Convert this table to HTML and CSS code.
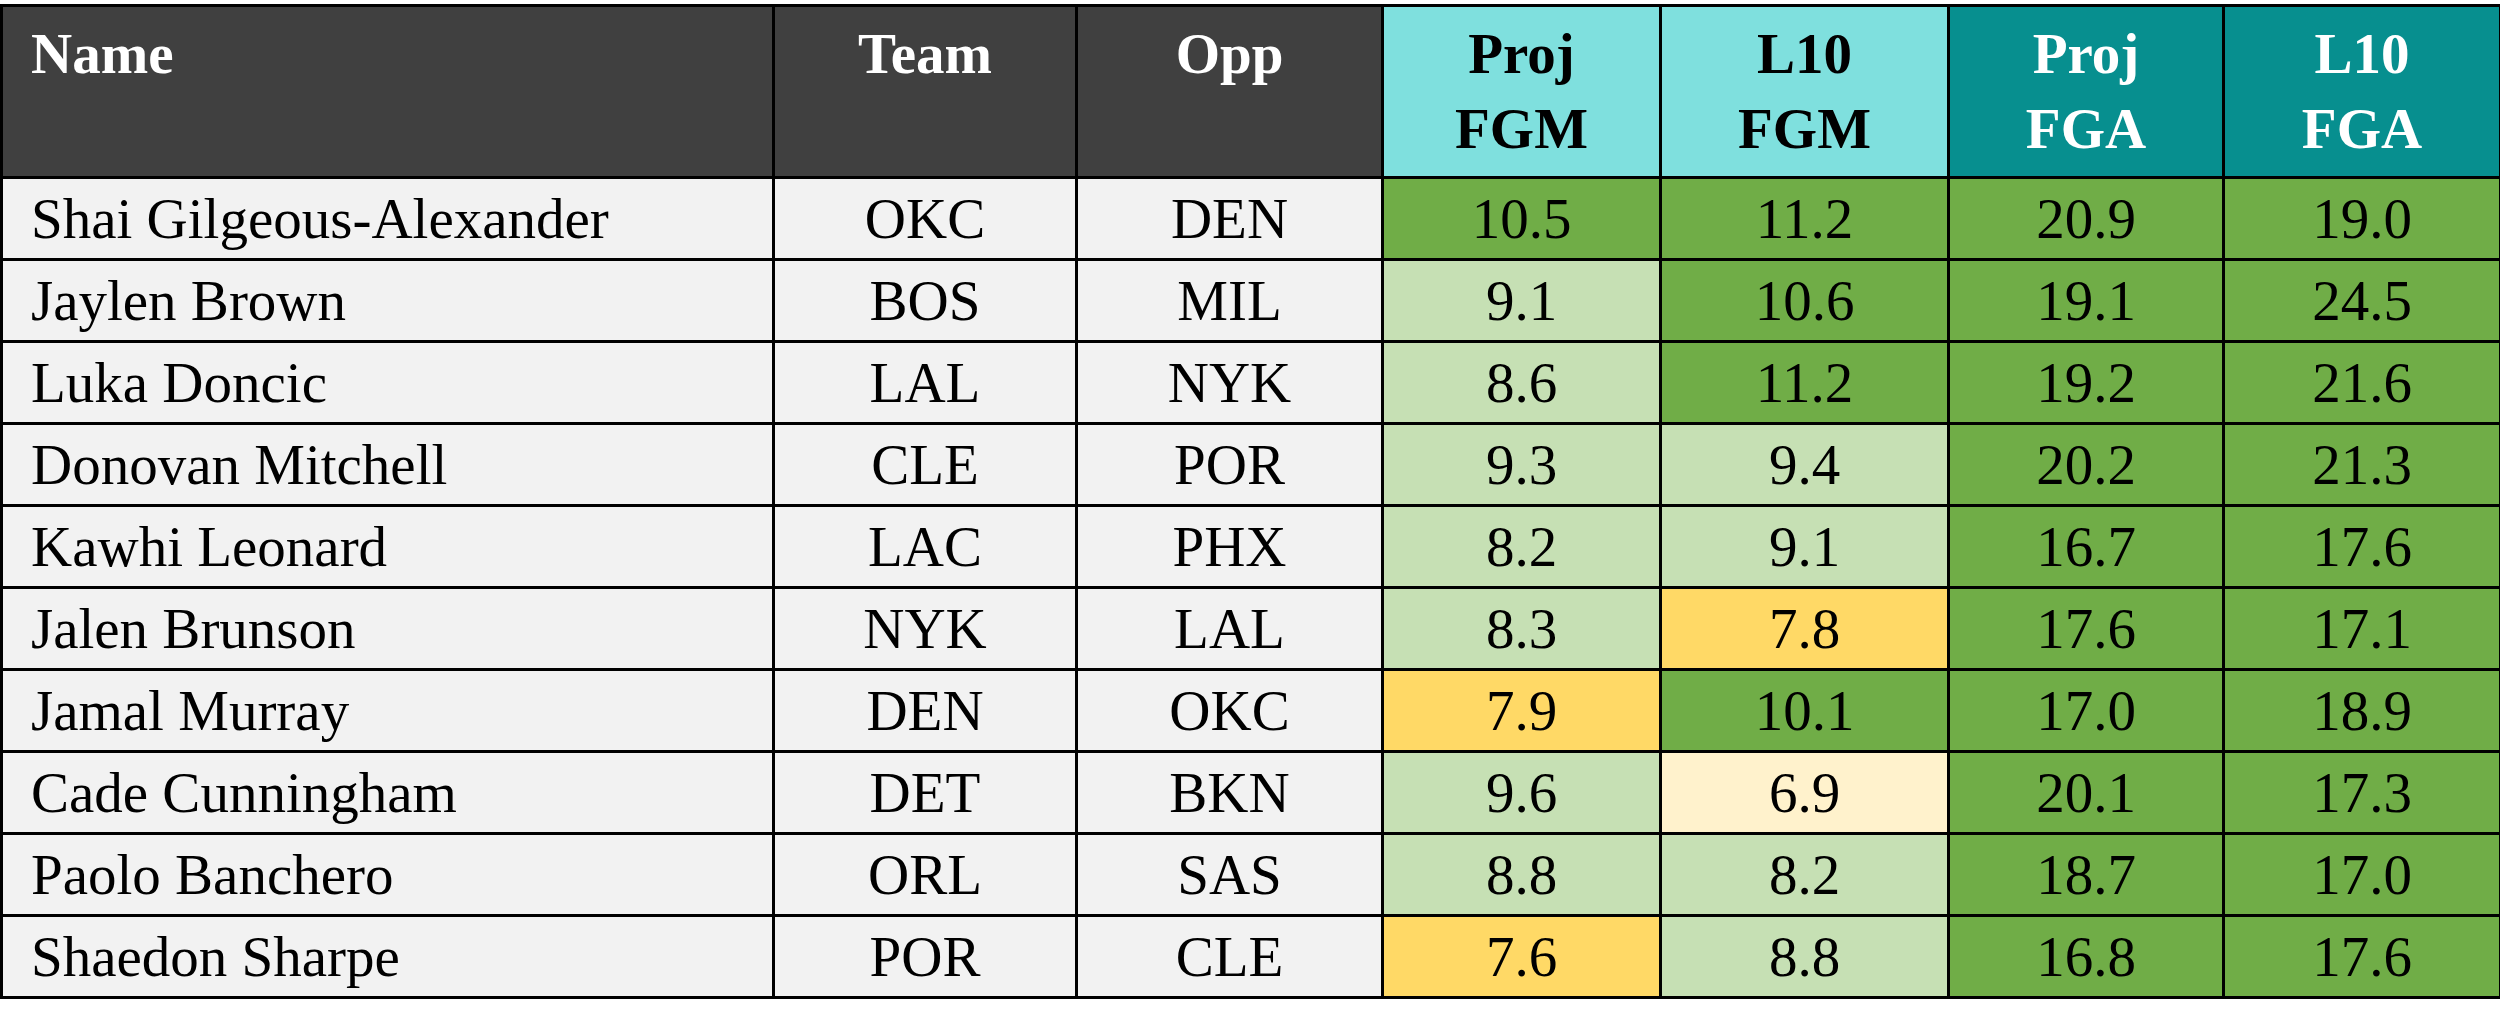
FILE: index.html
```html
<!DOCTYPE html>
<html>
<head>
<meta charset="utf-8">
<link rel="stylesheet" href="styles.css">
</head>
<body>
<table class="stats">
  <colgroup>
    <col class="c-name"><col class="c-team"><col class="c-opp"><col class="c-pfgm"><col class="c-lfgm"><col class="c-pfga"><col class="c-lfga">
  </colgroup>
  <thead>
    <tr>
      <th class="h-dark left">Name</th>
      <th class="h-dark">Team</th>
      <th class="h-dark">Opp</th>
      <th class="h-cyan">Proj<br>FGM</th>
      <th class="h-cyan">L10<br>FGM</th>
      <th class="h-teal">Proj<br>FGA</th>
      <th class="h-teal">L10<br>FGA</th>
    </tr>
  </thead>
  <tbody>
    <tr><td class="name">Shai Gilgeous-Alexander</td><td>OKC</td><td>DEN</td><td class="g">10.5</td><td class="g">11.2</td><td class="g">20.9</td><td class="g">19.0</td></tr>
    <tr><td class="name">Jaylen Brown</td><td>BOS</td><td>MIL</td><td class="lg">9.1</td><td class="g">10.6</td><td class="g">19.1</td><td class="g">24.5</td></tr>
    <tr><td class="name">Luka Doncic</td><td>LAL</td><td>NYK</td><td class="lg">8.6</td><td class="g">11.2</td><td class="g">19.2</td><td class="g">21.6</td></tr>
    <tr><td class="name">Donovan Mitchell</td><td>CLE</td><td>POR</td><td class="lg">9.3</td><td class="lg">9.4</td><td class="g">20.2</td><td class="g">21.3</td></tr>
    <tr><td class="name">Kawhi Leonard</td><td>LAC</td><td>PHX</td><td class="lg">8.2</td><td class="lg">9.1</td><td class="g">16.7</td><td class="g">17.6</td></tr>
    <tr><td class="name">Jalen Brunson</td><td>NYK</td><td>LAL</td><td class="lg">8.3</td><td class="y">7.8</td><td class="g">17.6</td><td class="g">17.1</td></tr>
    <tr><td class="name">Jamal Murray</td><td>DEN</td><td>OKC</td><td class="y">7.9</td><td class="g">10.1</td><td class="g">17.0</td><td class="g">18.9</td></tr>
    <tr><td class="name">Cade Cunningham</td><td>DET</td><td>BKN</td><td class="lg">9.6</td><td class="py">6.9</td><td class="g">20.1</td><td class="g">17.3</td></tr>
    <tr><td class="name">Paolo Banchero</td><td>ORL</td><td>SAS</td><td class="lg">8.8</td><td class="lg">8.2</td><td class="g">18.7</td><td class="g">17.0</td></tr>
    <tr><td class="name">Shaedon Sharpe</td><td>POR</td><td>CLE</td><td class="y">7.6</td><td class="lg">8.8</td><td class="g">16.8</td><td class="g">17.6</td></tr>
  </tbody>
</table>
</body>
</html>
```
FILE: styles.css
```css
html, body {
  margin: 0;
  padding: 0;
  background: #ffffff;
}

.stats {
  margin-top: 4px;
  border-collapse: collapse;
  table-layout: fixed;
  width: 2499px;
  font-family: "Liberation Serif", "Times New Roman", serif;
  font-size: 57px;
  color: #000000;
}

.c-name { width: 772px; }
.c-team { width: 303px; }
.c-opp  { width: 306px; }
.c-pfgm { width: 278px; }
.c-lfgm { width: 288px; }
.c-pfga { width: 275px; }
.c-lfga { width: 277px; }

.stats th,
.stats td {
  border: 3px solid #000000;
  text-align: center;
  padding: 0;
  white-space: nowrap;
}

.stats thead tr {
  height: 172px;
}

.stats th {
  vertical-align: top;
  font-weight: bold;
  line-height: 75px;
  padding-top: 9px;
}

.stats th.left {
  text-align: left;
  padding-left: 28px;
}

.h-dark { background: #404040; color: #ffffff; }
.h-cyan { background: #7fe0de; color: #000000; }
.h-teal { background: #078f8f; color: #ffffff; }

.stats tbody tr {
  height: 82px;
}

.stats td {
  vertical-align: middle;
  background: #f2f2f2;
  line-height: 1;
}

.stats td.name {
  text-align: left;
  padding-left: 28px;
}

.stats td.g  { background: #70ad47; }
.stats td.lg { background: #c6e0b4; }
.stats td.y  { background: #ffd966; }
.stats td.py { background: #fff2cc; }
```
